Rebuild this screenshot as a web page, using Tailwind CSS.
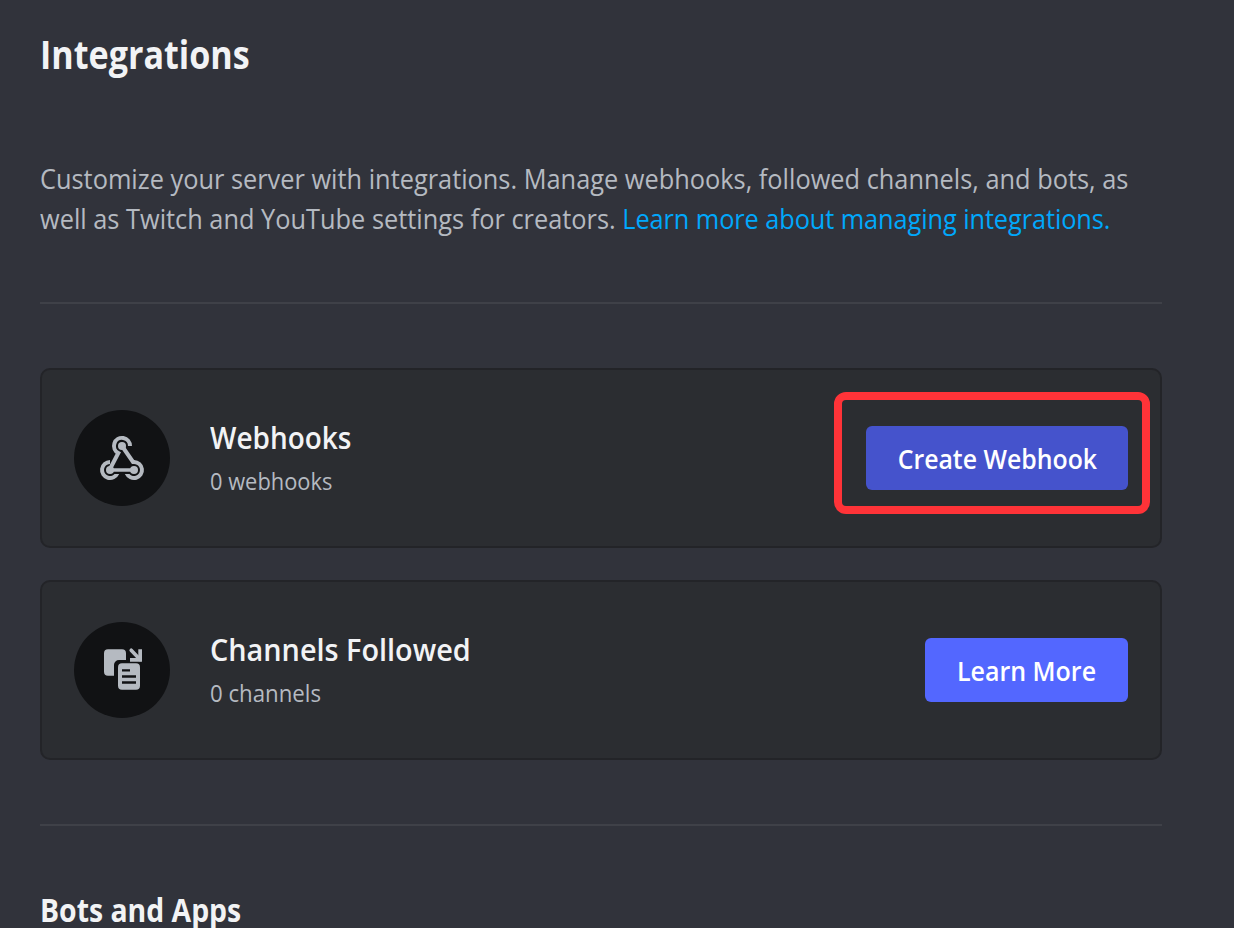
<!DOCTYPE html>
<html lang="en">
<head>
<meta charset="utf-8">
<title>Integrations</title>
<script src="https://cdn.jsdelivr.net/npm/@tailwindcss/browser@4"></script>
</head>
<body class="h-[928px] overflow-hidden bg-[#31333b] font-['Open_Sans',sans-serif] text-[#f2f3f5]">
<main class="flex w-[1162px] flex-col pl-10">
  <h1 class="mt-[30px] h-12 origin-left scale-x-[0.886] whitespace-nowrap text-[38.5px] leading-[48px] font-bold">Integrations</h1>
  <p class="mt-[81px] origin-left scale-x-[0.922] text-[27.5px] leading-10 whitespace-nowrap text-[#b5bac1]"><span>Customize your server with integrations. Manage webhooks, followed channels, and bots, as</span><br><span>well as Twitch and YouTube settings for creators. </span><a class="tracking-[-0.1px] text-[#00a8fc]">Learn more about managing integrations.</a></p>
  <div class="mt-[63px] h-0.5 bg-[#3f4148]"></div>
  <section class="mt-16 flex h-[180px] items-center rounded-[10px] border-2 border-[#232428] bg-[#2b2d31] px-8">
    <div class="flex size-24 items-center justify-center rounded-full bg-[#111214]">
      <svg class="size-12" viewBox="0 0 48 48" fill="#b5bac1">
        <circle cx="24" cy="12" r="4"/>
        <circle cx="12" cy="36" r="4"/>
        <circle cx="36" cy="36" r="4"/>
        <path d="M12 26A10 10 0 1 0 21.200 40H16.500A6 6 0 1 1 12 30Z"/>
        <path d="M36 26A10 10 0 1 1 26.800 40H31.500A6 6 0 1 0 36 30Z"/>
        <path d="M32 12A8 8 0 1 0 20.300 19L12 35M24 12L35 28H36.500" fill="none" stroke="#b5bac1" stroke-width="4"/>
        <path d="M12 36H36" stroke="#b5bac1" stroke-width="3.500"/>
      </svg>
    </div>
    <div class="ml-10 flex-1 pt-[2px]">
      <h2 class="origin-left scale-x-[0.887] whitespace-nowrap text-[31.5px] leading-10 font-semibold">Webhooks</h2>
      <p class="mt-1 origin-left scale-x-[0.93] whitespace-nowrap text-[23.5px] leading-10 text-[#b5bac1]">0 webhooks</p>
    </div>
    <div class="relative">
      <button class="flex h-16 w-[262px] items-center justify-center whitespace-nowrap rounded-md bg-[#4553cc] pt-px text-[27.5px] font-semibold text-white"><span class="scale-x-[0.903]">Create Webhook</span></button>
      <div class="absolute -top-[34px] -left-8 h-[122px] w-[316px] rounded-xl border-8 border-[#ff3338]"></div>
    </div>
  </section>
  <section class="mt-8 flex h-[180px] items-center rounded-[10px] border-2 border-[#232428] bg-[#2b2d31] px-8">
    <div class="flex size-24 items-center justify-center rounded-full bg-[#111214]">
      <svg class="size-12" viewBox="0 0 48 48" fill="#b5bac1">
        <path d="M10 3.200H24a4 4 0 0 1 4 4V14H21a5 5 0 0 0-5 5V29.700H10a4 4 0 0 1-4-4V7.200a4 4 0 0 1 4-4Z"/>
        <rect x="20" y="17.300" width="22" height="26.400" rx="4"/>
        <path d="M24 24.300H32M24 30.500H38M24 36.500H38" stroke="#111214" stroke-width="2.300"/>
        <path d="M33.200 4.200L42 13.500" stroke="#b5bac1" stroke-width="3.600" stroke-linecap="round"/>
        <path d="M40.300 3.200H44V15.800H32V12H40.300Z"/>
      </svg>
    </div>
    <div class="ml-10 flex-1 pt-[2px]">
      <h2 class="origin-left scale-x-[0.915] whitespace-nowrap text-[31.5px] leading-10 font-semibold">Channels Followed</h2>
      <p class="mt-1 origin-left scale-x-[0.945] whitespace-nowrap text-[23.5px] leading-10 text-[#b5bac1]">0 channels</p>
    </div>
    <button class="flex h-16 w-[203px] items-center justify-center whitespace-nowrap rounded-md bg-[#5367ff] pt-px text-[27.5px] font-semibold text-white"><span class="scale-x-[0.908]">Learn More</span></button>
  </section>
  <div class="mt-16 h-0.5 bg-[#3f4148]"></div>
  <h2 class="mt-[64px] origin-left scale-x-[0.901] whitespace-nowrap text-[31.5px] leading-10 font-bold">Bots and Apps</h2>
</main>
</body>
</html>
